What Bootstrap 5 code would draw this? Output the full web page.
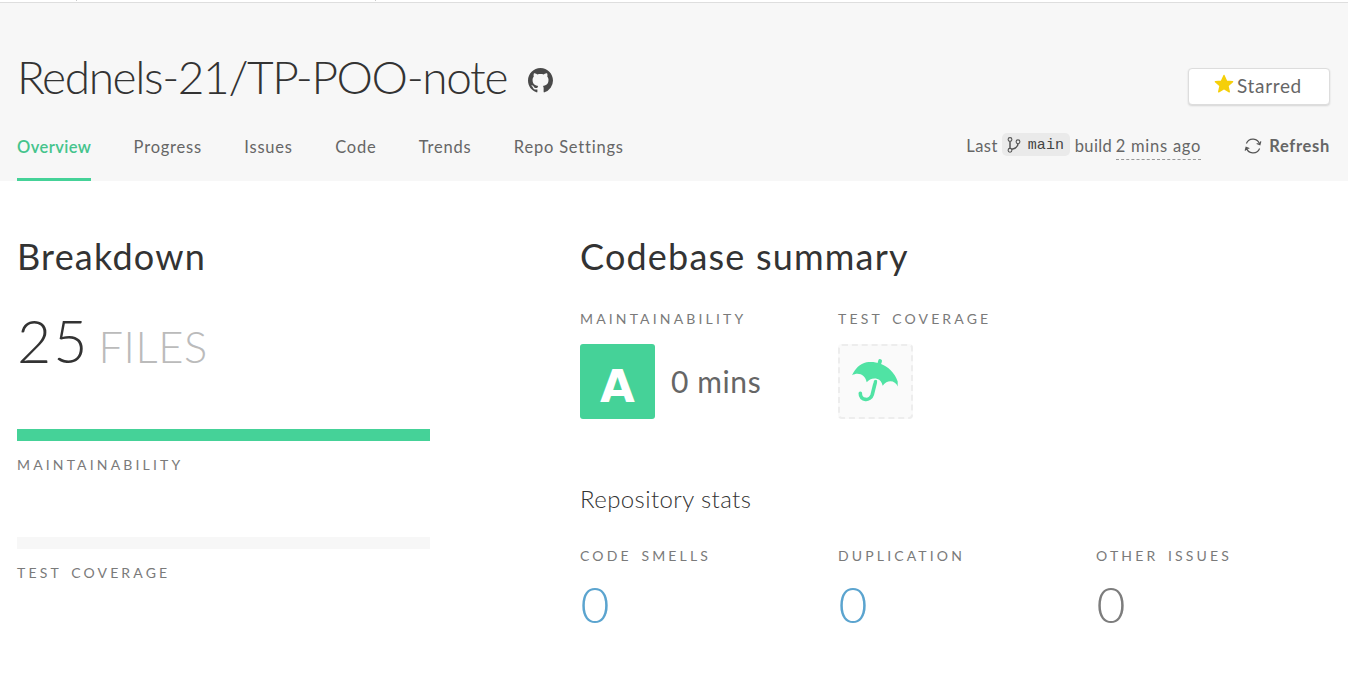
<!DOCTYPE html>
<html lang="en">
<head>
<meta charset="utf-8">
<meta name="viewport" content="width=device-width, initial-scale=1">
<title>Rednels-21/TP-POO-note</title>
<link href="https://cdn.jsdelivr.net/npm/bootstrap@5.3.0/dist/css/bootstrap.min.css" rel="stylesheet">
<style>
body{font-family:Lato,"Open Sans",sans-serif;color:#666;background:#fff;font-size:16.5px;line-height:24px;overflow:hidden}
.topline{height:3px;border-bottom:1px solid #dedede;background:#fff}
.tick{width:1px;height:1px;background:#ccc}
.tick-a{margin-left:76px}.tick-b{margin-left:298px}
.repo-head{height:178px;background:#f7f7f7;padding:0 18px 0 17px}
.repo-title{font-size:46px;font-weight:300;line-height:53px;color:#333;letter-spacing:-1.38px}
.gh{margin:18px 0 0 20.500px}
.title-row{padding-top:47px;height:115px}
.star-btn{width:142px;height:37px;margin-top:18px;background:#fff;border:1px solid #ddd;border-radius:4px;box-shadow:0 1px 2px rgba(0,0,0,.14);font-size:19px;line-height:34px;color:#666;padding:0 2px 0 0;letter-spacing:.65px}
.star-btn svg{margin:5px 3px 0 0}
.tabs{gap:42.3px}
.tabs .nav-link{padding:17px 0 0;height:63px;color:#666;white-space:nowrap;letter-spacing:.8px}
.tabs .nav-link.active{color:#45c48c;font-weight:600;border-bottom:3px solid #45d298;letter-spacing:.42px}
.build{padding-top:15px;white-space:nowrap;letter-spacing:.4px}
.build .word{margin-top:1px}
.branch{height:23px;width:68px;margin:0 5px 0 4px;background:#eaeaea;border-radius:5px;font:15px/26px "Liberation Mono",monospace;letter-spacing:.1px;color:#444}
.branch svg{margin:4px 7px 0 5px}
.ago{border-bottom:1px dashed #999;line-height:23px;height:25px;margin:2px 0 0 3.500px;letter-spacing:.75px}
.build .sync{margin:4px 7px 0 43px}
.refresh{font-weight:700;letter-spacing:.7px;margin-top:1px}
h2{font-size:36px;font-weight:400;line-height:44px;color:#333;margin:0;letter-spacing:1.2px}
.col-left{width:413px;margin-left:17px}
.col-right{margin-left:150px;width:768px}
.content-row{padding-top:53px}
.files{height:75px;margin-top:28px}
.files-num{font-size:59px;font-weight:300;color:#333;line-height:70px;letter-spacing:2px;margin-right:9px}
.files-word{font-size:43.5px;font-weight:300;color:#bbb;line-height:70px;letter-spacing:.6px}
.meter{height:12px;background:#f7f7f7;margin-top:48px}
.meter + .cap-label{margin-top:14px}
.cap-label + .meter{margin-top:62px}
.meter-fill{background:#45d298;height:12px}
.cap-label{font-size:14px;line-height:20px;letter-spacing:3.15px;word-spacing:3px;color:#7a7a7a;white-space:nowrap}
.cell{width:258px;flex-shrink:0}
.grades{margin-top:31px}
.g-row{margin-top:15px}
.grade{width:75px;height:75px;border-radius:3px;background:#45d298;color:#fff;font:700 45px/85px "DejaVu Sans",sans-serif}
.grade-none{width:75px;height:75px;border-radius:4px;background:#fafafa;border:2px dashed #ededed}
.grade-none svg{display:block}
.debt{font-size:30px;line-height:75px;margin-left:16px;letter-spacing:.6px}
h3{font-size:24px;font-weight:300;line-height:30px;color:#333;margin:65px 0 32px;letter-spacing:.4px}
.stat{font-size:50px;font-weight:300;line-height:60px;margin:8px 0 0 .5px}
.blue{color:#5ba4cf}
.gray{color:#7d7d7d}
</style>
<script src="https://cdn.jsdelivr.net/npm/bootstrap@5.3.0/dist/js/bootstrap.bundle.min.js"></script>
</head>
<body>
<div class="topline d-flex"><span class="tick tick-a"></span><span class="tick tick-b"></span></div>
<header class="repo-head">
  <div class="title-row d-flex justify-content-between">
    <div class="d-flex">
      <h1 class="repo-title mb-0">Rednels-21/TP-POO-note</h1>
      <svg class="gh" width="25" height="25" viewBox="0 0 16 16" fill="#4a4a4a"><path d="M8 0C3.58 0 0 3.58 0 8c0 3.54 2.29 6.53 5.47 7.59.4.07.55-.17.55-.38 0-.19-.01-.82-.01-1.49-2.01.37-2.53-.49-2.69-.94-.09-.23-.48-.94-.82-1.13-.28-.15-.68-.52-.01-.53.63-.01 1.08.58 1.23.82.72 1.21 1.87.87 2.33.66.07-.52.28-.87.51-1.07-1.78-.2-3.64-.89-3.64-3.95 0-.87.31-1.59.82-2.15-.08-.2-.36-1.02.08-2.12 0 0 .67-.21 2.2.82.64-.18 1.32-.27 2-.27s1.36.09 2 .27c1.53-1.04 2.2-.82 2.2-.82.44 1.1.16 1.92.08 2.12.51.56.82 1.27.82 2.15 0 3.07-1.87 3.75-3.65 3.95.29.25.54.73.54 1.48 0 1.07-.01 1.93-.01 2.2 0 .21.15.46.55.38A8.01 8.01 0 0 0 16 8c0-4.42-3.58-8-8-8z"/></svg>
    </div>
    <button class="btn star-btn d-flex justify-content-center"><svg width="20" height="20" viewBox="0 0 20 20" fill="#f5cf0a" stroke="#f5cf0a" stroke-width="1.4" stroke-linejoin="round"><path d="M10 1.500l2.500 5.600 6.100.6-4.600 4.100 1.300 6L10 14.700l-5.300 3.100 1.300-6L1.400 7.700l6.100-.6z"/></svg>Starred</button>
  </div>
  <div class="d-flex justify-content-between">
    <nav class="nav tabs flex-nowrap">
      <a class="nav-link active">Overview</a><a class="nav-link">Progress</a><a class="nav-link">Issues</a><a class="nav-link">Code</a><a class="nav-link">Trends</a><a class="nav-link">Repo Settings</a>
    </nav>
    <div class="build d-flex">
      <span class="word">Last</span>
      <span class="branch d-flex"><svg width="14" height="16" viewBox="0 0 14 16" fill="none" stroke="#555" stroke-width="1.1"><circle cx="3" cy="2.500" r="1.900"/><circle cx="3" cy="13.300" r="1.900"/><circle cx="11" cy="4.800" r="1.900"/><path d="M3 4.500v6.800M11 6.700c0 3-2 4.500-6.200 5.500" stroke-width="1.500"/></svg>main</span>
      <span class="word">build</span>
      <span class="ago">2 mins ago</span>
      <svg class="sync" width="18" height="18" viewBox="0 0 18 18" fill="none" stroke="#555" stroke-width="1.200"><path d="M2.400 6.500A7 7 0 0 1 15.700 7.500M16.800 4.300l-.9 3.400-3.200-1.200M15.600 11.500A7 7 0 0 1 2.300 10.500M1.200 13.700l.9-3.400 3.200 1.200"/></svg>
      <span class="refresh">Refresh</span>
    </div>
  </div>
</header>
<main class="content-row d-flex">
  <section class="col-left">
    <h2>Breakdown</h2>
    <div class="d-flex align-items-baseline files"><span class="files-num">25</span><span class="files-word">FILES</span></div>
    <div class="meter"><div class="meter-fill" style="width:100%"></div></div>
    <div class="cap-label">MAINTAINABILITY</div>
    <div class="meter"></div>
    <div class="cap-label">TEST COVERAGE</div>
  </section>
  <section class="col-right">
    <h2>Codebase summary</h2>
    <div class="d-flex grades">
      <div class="cell"><div class="cap-label">MAINTAINABILITY</div><div class="d-flex g-row"><div class="grade text-center">A</div><div class="debt">0 mins</div></div></div>
      <div class="cell"><div class="cap-label">TEST COVERAGE</div><div class="g-row d-flex"><div class="grade-none"><svg width="71" height="71" viewBox="2 2 71 71"><path fill="#50e3a4" d="M14 31.300C17 25 22 19.500 28.500 18.300 33 17.500 38 18 42.500 19.700 50 22.500 57 29 59.700 37.500V42.500C57.500 36.500 49.500 35 44.700 41.700 43.800 38 42 35.500 39.500 35 35 33.800 31.500 35 28.700 38.300 27.500 31 20.500 27.500 14 31.300z"/><path fill="none" stroke="#50e3a4" stroke-width="3.800" stroke-linecap="round" d="M42.100 17l-.5 1.700"/><path fill="none" stroke="#50e3a4" stroke-width="3.600" stroke-linecap="round" d="M37.500 37.500L34.300 50.500C32.300 57.500 22 57 22.300 49.200"/><path fill="none" stroke="#fafafa" stroke-width=".7" d="M34.800 39.500c.3-3 1.500-4.400 3.200-4.200 1.500.2 2 1.600 1.500 4"/></svg></div></div></div>
    </div>
    <h3>Repository stats</h3>
    <div class="d-flex stats">
      <div class="cell"><div class="cap-label">CODE SMELLS</div><div class="stat blue">0</div></div>
      <div class="cell"><div class="cap-label">DUPLICATION</div><div class="stat blue">0</div></div>
      <div class="cell"><div class="cap-label">OTHER ISSUES</div><div class="stat gray">0</div></div>
    </div>
  </section>
</main>
</body>
</html>
